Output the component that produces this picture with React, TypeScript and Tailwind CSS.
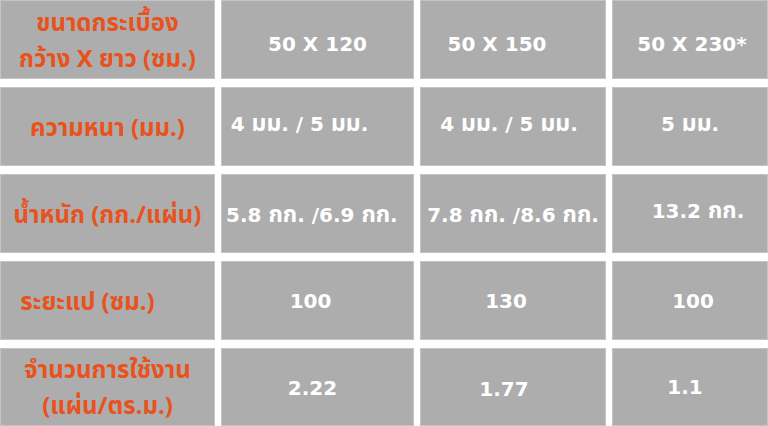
// ตารางสเปคกระเบื้อง - พื้นเทา, หัวแถวสีส้ม, ค่าสีขาว
const THAI = "font-['Noto_Sans','Noto_Sans_Thai','Liberation_Sans',sans-serif]";
const NUM = "font-['DejaVu_Sans','Noto_Sans','Noto_Sans_Thai',sans-serif]";

type Cell = { text: string[]; cls?: string };

const ROWS: { label: Cell; values: Cell[] }[] = [
  {
    label: { text: ["ขนาดกระเบื้อง", "กว้าง X ยาว (ซม.)"] },
    values: [
      { text: ["50 X 120"], cls: "pt-[8px]" },
      { text: ["50 X 150"], cls: "pt-[8px] pr-[32px]" },
      { text: ["50 X 230*"], cls: "pt-[8px] pl-[4px]" },
    ],
  },
  {
    label: { text: ["ความหนา (มม.)"] },
    values: [
      { text: ["4 มม. / 5 มม."], cls: "pb-[8px] pr-[36px]" },
      { text: ["4 มม. / 5 มม."], cls: "pb-[8px] pr-[8px]" },
      { text: ["5 มม."], cls: "pb-[8px]" },
    ],
  },
  {
    label: { text: ["น้ำหนัก (กก./แผ่น)"] },
    values: [
      { text: ["5.8 กก. /6.9 กก."], cls: "justify-start pl-[4px]" },
      { text: ["7.8 กก. /8.6 กก."] },
      { text: ["13.2 กก."], cls: "pb-[8px] pl-[16px]" },
    ],
  },
  {
    label: { text: ["ระยะแป (ซม.)"], cls: "pr-[40px]" },
    values: [
      { text: ["100"], cls: "pr-[14px]" },
      { text: ["130"], cls: "pr-[14px]" },
      { text: ["100"], cls: "pl-[6px]" },
    ],
  },
  {
    label: { text: ["จำนวนการใช้งาน", "(แผ่น/ตร.ม.)"] },
    values: [
      { text: ["2.22"], cls: "pt-[2px] pr-[10px]" },
      { text: ["1.77"], cls: "pt-[4px] pr-[18px]" },
      { text: ["1.1"], cls: "pr-[10px]" },
    ],
  },
];

// ตัวอักษรไทยในช่องค่าใหญ่กว่าตัวเลข
function Mixed({ s }: { s: string }) {
  const parts = s.split(/([\u0E00-\u0E7F]+)/);
  return (
    <span>
      {parts.map((p, i) =>
        /[\u0E00-\u0E7F]/.test(p) ? (
          <span key={i} className={`text-[23px] ${THAI}`}>
            {p}
          </span>
        ) : (
          <span key={i}>{p}</span>
        )
      )}
    </span>
  );
}

export default function App() {
  return (
    <div className="w-[768px] h-[426px] bg-white overflow-hidden">
      <div className="grid grid-cols-[215px_193px_186px_156px] grid-rows-[79px_79px_79px_79px_78px] gap-x-[6px] gap-y-[8px]">
        {ROWS.map((r, i) => (
          <div key={i} className="contents">
            <div
              className={`bg-[#adadad] border border-[#c4c4c4] flex flex-col items-center justify-center text-[#e8521c] font-bold text-[24px] leading-[36px] whitespace-nowrap ${THAI} ${r.label.cls ?? ""}`}
            >
              {r.label.text.map((t) => (
                <span key={t}>{t}</span>
              ))}
            </div>
            {r.values.map((v, j) => (
              <div
                key={j}
                className={`bg-[#adadad] border border-[#c4c4c4] flex items-center justify-center text-white font-bold text-[20px] leading-[30px] whitespace-nowrap overflow-hidden ${NUM} ${v.cls ?? ""}`}
              >
                <Mixed s={v.text[0]} />
              </div>
            ))}
          </div>
        ))}
      </div>
    </div>
  );
}
